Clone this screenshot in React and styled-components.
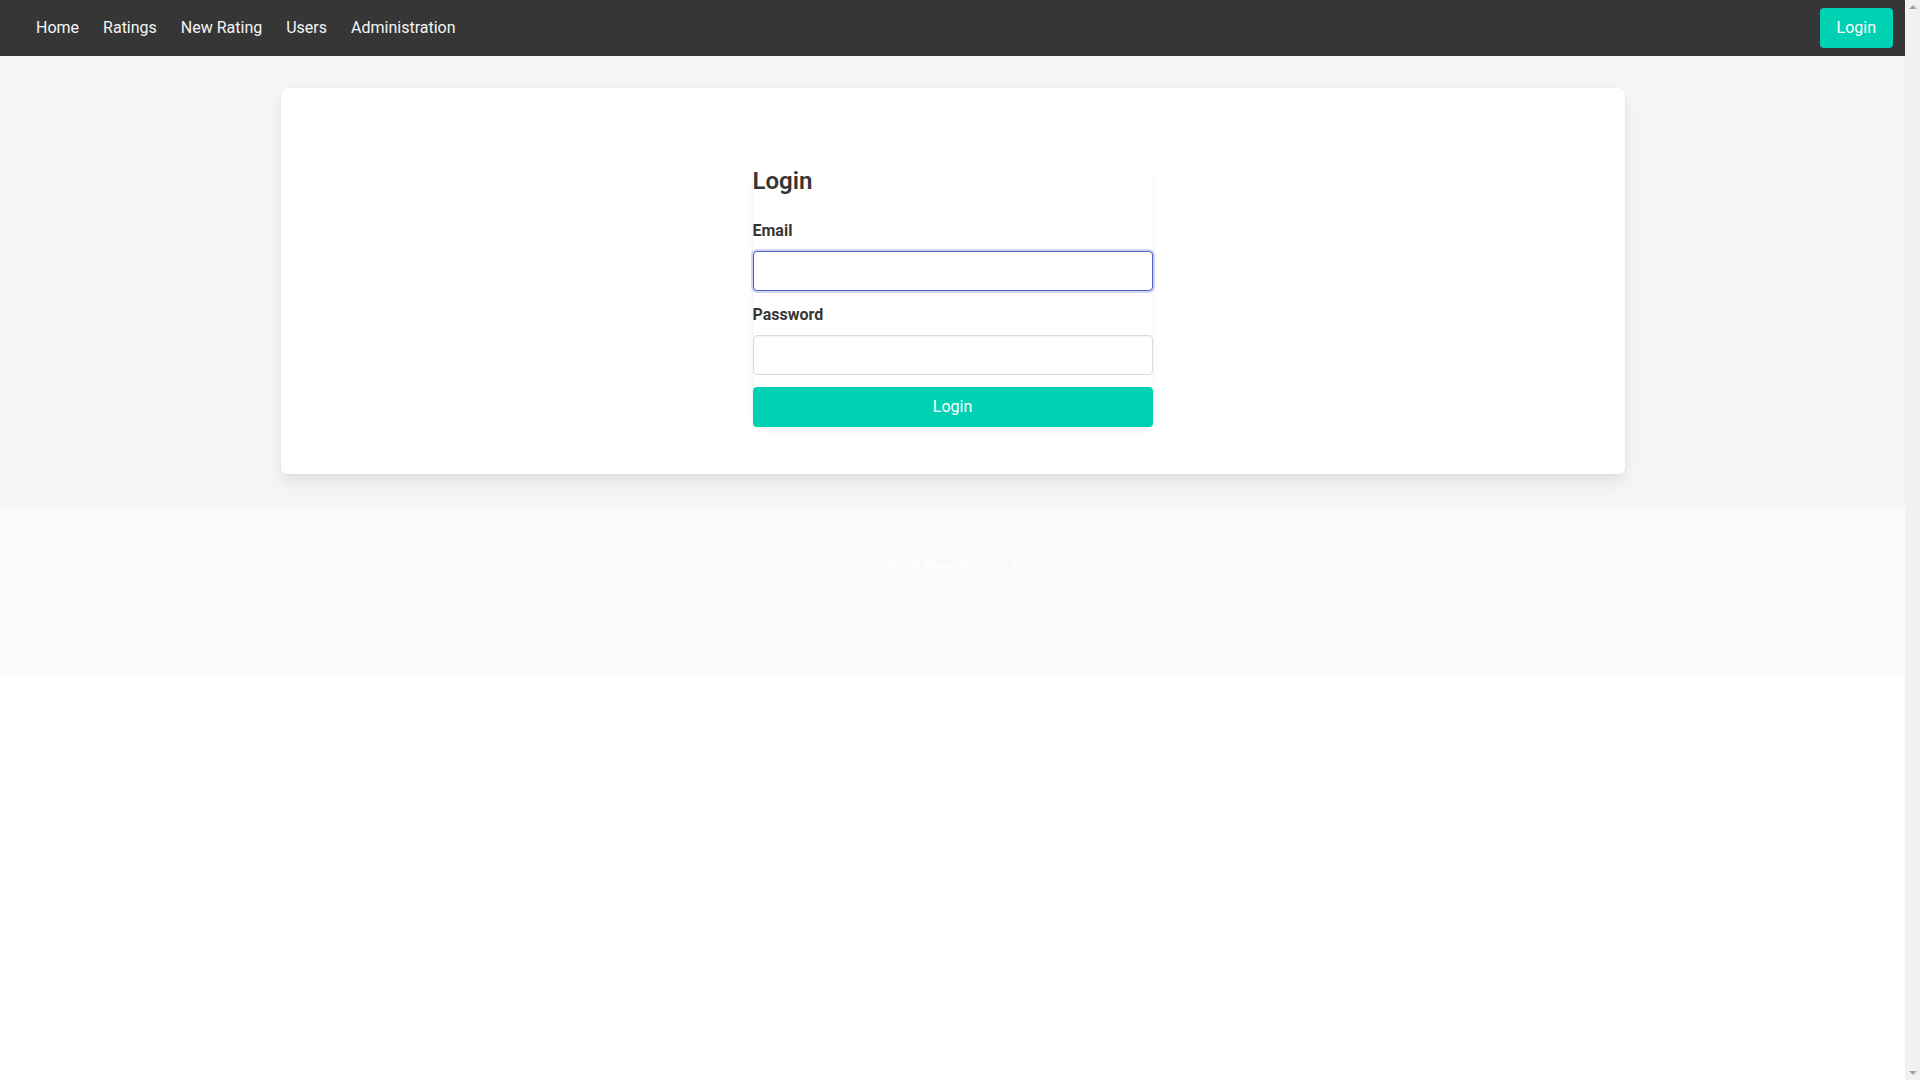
import React from 'react';
import styled, { createGlobalStyle } from 'styled-components';

const GlobalStyle = createGlobalStyle`
  html {
    overflow-y: scroll;
    background: #fff;
  }
  body {
    margin: 0;
    padding-right: 15px;
    font-family: Roboto, "Liberation Sans", sans-serif;
    font-size: 16px;
    line-height: 1.5;
    color: #4a4a4a;
  }
  * {
    box-sizing: border-box;
  }
`;

// stand-in for the browser's classic scrollbar seen in the screenshot
const ScrollTrack = styled.div`
  position: fixed;
  top: 0;
  right: 0;
  bottom: 0;
  width: 15px;
  background-color: #f1f1f1;
  display: flex;
  flex-direction: column;
  justify-content: space-between;
  align-items: center;
  padding: 5px 0;
`;

const Arrow = styled.span`
  width: 0;
  height: 0;
  border-left: 4px solid transparent;
  border-right: 4px solid transparent;
  ${(p) =>
    p.$down ? 'border-top: 4px solid #a3a3a3;' : 'border-bottom: 4px solid #a3a3a3;'}
`;

const Navbar = styled.nav`
  display: flex;
  align-items: center;
  justify-content: space-between;
  height: 56px;
  padding: 0 12px;
  background-color: #363636;
`;

const NavLinks = styled.div`
  display: flex;
  align-items: center;
  margin-left: 12px;
`;

const NavLink = styled.a`
  padding: 0 12px;
  color: #f5f5f5;
  font-size: 16px;
  line-height: 24px;
  text-decoration: none;
  cursor: pointer;
`;

const Button = styled.button`
  display: flex;
  align-items: center;
  justify-content: center;
  width: ${(p) => (p.$full ? '100%' : 'auto')};
  height: 40px;
  padding: 0 16px;
  border: 1px solid transparent;
  border-radius: 4px;
  background-color: #00d1b2;
  color: #fff;
  font-family: Roboto, "Liberation Sans", sans-serif;
  font-size: 16px;
  line-height: 24px;
  cursor: pointer;
`;

const Section = styled.main`
  background-color: #f5f5f5;
  padding: 32px 0 33px;
`;

const Container = styled.div`
  width: 1344px;
  margin: 0 auto;
`;

const Card = styled.div`
  background-color: #fff;
  border-radius: 6px;
  box-shadow: 0 0.5em 1em -0.125em rgba(10, 10, 10, 0.1),
    0 0 0 1px rgba(10, 10, 10, 0.02);
  padding: 80px 20px 47px;
`;

const FormPanel = styled.form`
  width: 400px;
  margin: 0 auto;
  border-radius: 6px;
  box-shadow: 0 0.25em 0.6em -0.125em rgba(10, 10, 10, 0.06),
    0 0 0 1px rgba(10, 10, 10, 0.015);
`;

const Title = styled.h1`
  margin: 0 0 24px;
  font-size: 24px;
  font-weight: 600;
  line-height: 1.125;
  color: #363636;
`;

const Field = styled.div`
  margin-bottom: 12px;
  &:last-child {
    margin-bottom: 0;
  }
`;

const Label = styled.label`
  display: block;
  margin-bottom: 8px;
  font-size: 16px;
  font-weight: 700;
  line-height: 24px;
  color: #363636;
`;

const Input = styled.input`
  display: block;
  width: 100%;
  height: 40px;
  padding: 7px 11px;
  border: 1px solid ${(p) => (p.$focused ? '#485fc7' : '#dbdbdb')};
  border-radius: 4px;
  background: #fff;
  box-shadow: ${(p) =>
    p.$focused
      ? '0 0 0 0.125em rgba(72, 95, 199, 0.25)'
      : 'inset 0 0.0625em 0.125em rgba(10, 10, 10, 0.05)'};
  font-family: Roboto, "Liberation Sans", sans-serif;
  font-size: 16px;
  color: #363636;
  outline: none;
`;

const Footer = styled.footer`
  background-color: #fafafa;
  padding: 48px 24px 96px;
  text-align: center;
  color: #fff;
  font-size: 16px;
  line-height: 24px;
`;

export default function App() {
  const links = ['Home', 'Ratings', 'New Rating', 'Users', 'Administration'];

  return (
    <>
      <GlobalStyle />
      <Navbar>
        <NavLinks>
          {links.map((l) => (
            <NavLink key={l}>{l}</NavLink>
          ))}
        </NavLinks>
        <Button type="button">Login</Button>
      </Navbar>

      <Section>
        <Container>
          <Card>
            <FormPanel onSubmit={(e) => e.preventDefault()}>
              <Title>Login</Title>
              <Field>
                <Label htmlFor="email">Email</Label>
                <Input id="email" type="email" $focused />
              </Field>
              <Field>
                <Label htmlFor="password">Password</Label>
                <Input id="password" type="password" />
              </Field>
              <Field>
                <Button type="submit" $full>
                  Login
                </Button>
              </Field>
            </FormPanel>
          </Card>
        </Container>
      </Section>

      <Footer>© 2025 Beer Rating App</Footer>

      <ScrollTrack>
        <Arrow />
        <Arrow $down />
      </ScrollTrack>
    </>
  );
}
